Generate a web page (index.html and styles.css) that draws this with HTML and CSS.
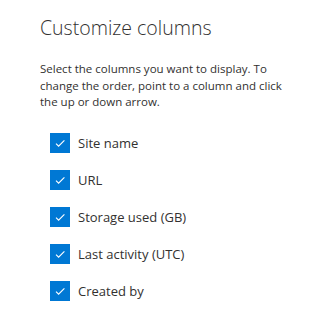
FILE: index.html
```html
<!DOCTYPE html>
<html>
<head>
<meta charset="utf-8">
<link rel="stylesheet" href="styles.css">
</head>
<body>
<div class="panel">
  <h1 class="title">Customize columns</h1>
  <p class="desc">Select the columns you want to display. To change the order, point to a column and click the up or down arrow.</p>
  <ul class="list">
    <li class="row"><span class="box"><svg viewBox="0 0 20 20" width="20" height="20"><path d="M6 10.6l2.6 2.6L14.4 7.4" fill="none" stroke="#fff" stroke-width="1.1"/></svg></span><span class="label">Site name</span></li>
    <li class="row"><span class="box"><svg viewBox="0 0 20 20" width="20" height="20"><path d="M6 10.6l2.6 2.6L14.4 7.4" fill="none" stroke="#fff" stroke-width="1.1"/></svg></span><span class="label">URL</span></li>
    <li class="row"><span class="box"><svg viewBox="0 0 20 20" width="20" height="20"><path d="M6 10.6l2.6 2.6L14.4 7.4" fill="none" stroke="#fff" stroke-width="1.1"/></svg></span><span class="label">Storage used (GB)</span></li>
    <li class="row"><span class="box"><svg viewBox="0 0 20 20" width="20" height="20"><path d="M6 10.6l2.6 2.6L14.4 7.4" fill="none" stroke="#fff" stroke-width="1.1"/></svg></span><span class="label">Last activity (UTC)</span></li>
    <li class="row"><span class="box"><svg viewBox="0 0 20 20" width="20" height="20"><path d="M6 10.6l2.6 2.6L14.4 7.4" fill="none" stroke="#fff" stroke-width="1.1"/></svg></span><span class="label">Created by</span></li>
  </ul>
</div>
</body>
</html>
```
FILE: styles.css
```css
html, body {
  margin: 0;
  padding: 0;
  background: #fff;
}
body {
  font-family: "Open Sans", "Noto Sans", sans-serif;
  color: #323130;
}
.panel {
  padding: 14px 20px 0 40px;
}
.title {
  margin: 0;
  font-size: 19.5px;
  font-weight: 300;
  line-height: 28px;
  color: #323130;
}
.desc {
  margin: 19px 0 0 0;
  font-size: 11.5px;
  line-height: 16.5px;
  width: 250px;
}
.list {
  list-style: none;
  margin: 22px 0 0 10px;
  padding: 0;
  display: flex;
  flex-direction: column;
  gap: 17px;
}
.row {
  display: flex;
  align-items: center;
  gap: 8px;
  height: 20px;
}
.box {
  width: 20px;
  height: 20px;
  background: #0078d4;
  display: block;
}
.box svg { display: block; }
.label {
  font-size: 13px;
  line-height: 20px;
}
```
